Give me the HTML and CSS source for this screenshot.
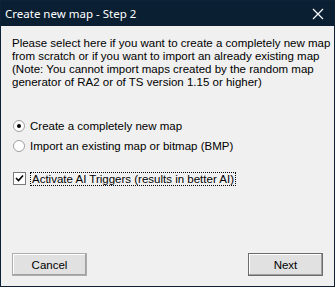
FILE: index.html
```html
<!DOCTYPE html>
<html lang="en">
<head>
    <meta charset="UTF-8">
    <title>Create new map - Step 2</title>
    <link rel="stylesheet" href="styles.css">
</head>
<body>
    <div class="window">
        <div class="titlebar">
            <span class="title">Create new map - Step 2</span>
            <svg class="close" width="12" height="12" viewBox="0 0 12 12">
                <path d="M1 1 L11 11 M11 1 L1 11" stroke="#fff" stroke-width="1.2" fill="none"/>
            </svg>
        </div>
        <div class="content">
            <p class="intro">
                Please select here if you want to create a completely new map<br>
                from scratch or if you want to import an already existing map<br>
                (Note: You cannot import maps created by the random map<br>
                generator of RA2 or of TS version 1.15 or higher)
            </p>

            <div class="options">
                <label class="option"><span class="radio checked"></span>Create a completely new map</label>
                <label class="option"><span class="radio"></span>Import an existing map or bitmap (BMP)</label>
            </div>

            <label class="option check-row">
                <span class="checkbox">
                    <svg width="9" height="9" viewBox="0 0 9 9"><path d="M1 4 L3.5 6.5 L8 1.5" stroke="#000" stroke-width="1.6" fill="none"/></svg>
                </span>
                <span class="focus">Activate AI Triggers (results in better AI)</span>
            </label>

            <div class="buttons">
                <button class="btn">Cancel</button>
                <button class="btn default">Next</button>
            </div>
        </div>
    </div>
</body>
</html>
```

FILE: styles.css
```css
body {
    margin: 0;
    font-family: "Liberation Sans", Arial, sans-serif;
    font-size: 11.5px;
    color: #000;
}
.window {
    width: 335px;
    height: 287px;
    box-sizing: border-box;
    border: 1px solid #0d2236;
    background: #f0f0f0;
    display: flex;
    flex-direction: column;
}
.titlebar {
    height: 25px;
    background: #0b1f33;
    color: #fff;
    display: flex;
    align-items: center;
    justify-content: space-between;
    padding: 0 10px 0 4px;
    flex-shrink: 0;
}
.title {
    font-family: "Noto Sans", sans-serif;
    font-size: 11.5px;
}
.content {
    flex: 1;
    padding: 11px 11px 10px 11px;
    display: flex;
    flex-direction: column;
}
.intro {
    margin: 0;
    line-height: 13px;
    white-space: nowrap;
}
.options {
    margin-top: 30px;
    display: flex;
    flex-direction: column;
    gap: 7px;
}
.option {
    display: flex;
    align-items: center;
    height: 13px;
}
.radio {
    width: 12px;
    height: 12px;
    border-radius: 50%;
    border: 1px solid #a0a0a0;
    background: #fff;
    box-sizing: border-box;
    margin: 0 5px 0 1px;
    position: relative;
}
.radio.checked::after {
    content: "";
    position: absolute;
    left: 3px;
    top: 3px;
    width: 4px;
    height: 4px;
    border-radius: 50%;
    background: #000;
}
.check-row {
    margin-top: 20px;
}
.checkbox {
    width: 13px;
    height: 13px;
    box-sizing: border-box;
    border: 1px solid #7a7a7a;
    background: #fff;
    margin: 0 5px 0 1px;
    display: flex;
    align-items: center;
    justify-content: center;
}
.focus {
    outline: 1px dotted #000;
    padding: 0 1px;
}
.buttons {
    margin-top: auto;
    display: flex;
    justify-content: space-between;
}
.btn {
    width: 75px;
    height: 23px;
    font-family: "Liberation Sans", Arial, sans-serif;
    font-size: 11.5px;
    background: #e1e1e1;
    border: 1px solid #adadad;
    box-shadow: inset -1px -1px #a0a0a0, inset 1px 1px #fff;
    padding: 0;
}
.btn.default {
    border-color: #6c6c6c;
}
```
